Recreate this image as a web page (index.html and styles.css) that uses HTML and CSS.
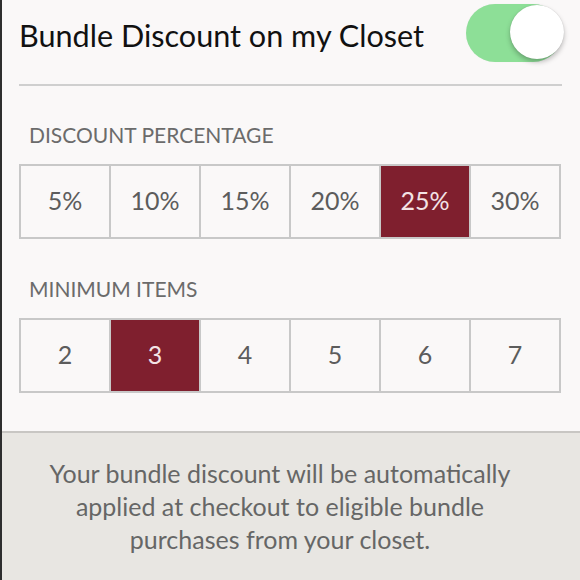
FILE: index.html
```html
<!DOCTYPE html>
<html lang="en">
<head>
<meta charset="utf-8">
<title>Bundle Discount</title>
<link rel="stylesheet" href="styles.css">
</head>
<body>
<div class="screen">
  <header class="head">
    <h1 class="title">Bundle Discount on my Closet</h1>
    <div class="toggle is-on" role="switch" aria-checked="true"><span class="knob"></span></div>
  </header>

  <section class="settings">
    <h2 class="label label-first">DISCOUNT PERCENTAGE</h2>
    <div class="options">
      <div class="opt">5%</div>
      <div class="opt">10%</div>
      <div class="opt">15%</div>
      <div class="opt">20%</div>
      <div class="opt is-selected">25%</div>
      <div class="opt">30%</div>
    </div>

    <h2 class="label">MINIMUM ITEMS</h2>
    <div class="options">
      <div class="opt">2</div>
      <div class="opt is-selected">3</div>
      <div class="opt">4</div>
      <div class="opt">5</div>
      <div class="opt">6</div>
      <div class="opt">7</div>
    </div>
  </section>

  <footer class="note">
    <p>Your bundle discount will be automatically<br>applied at checkout to eligible bundle<br>purchases from your closet.</p>
  </footer>
</div>
</body>
</html>
```

FILE: styles.css
```css
html, body {
  margin: 0;
  padding: 0;
  height: 100%;
}

body {
  background: #faf8f8;
  font-family: Lato, "Liberation Sans", Arial, sans-serif;
  overflow: hidden;
}

.screen {
  height: 580px;
  border-left: 2px solid #2e2e2e;
  display: flex;
  flex-direction: column;
}

/* Top row: title + switch */
.head {
  margin: 0 18px 0 17px;
  height: 84px;
  border-bottom: 2px solid #cfcfcf;
  display: flex;
  justify-content: space-between;
  align-items: flex-start;
}

.title {
  margin: 17px 0 0 0;
  font-size: 30.6px;
  font-weight: 400;
  color: #111;
  line-height: 38px;
}

.toggle {
  position: relative;
  width: 96px;
  height: 58px;
  margin-top: 4px;
  border-radius: 29px;
  background: #8ddf97;
  box-shadow: 0 0 1px rgba(0, 0, 0, 0.08);
}

.knob {
  position: absolute;
  top: 1px;
  right: -2px;
  width: 54px;
  height: 54px;
  border-radius: 50%;
  background: #fff;
  box-shadow: 0 3px 5px rgba(0, 0, 0, 0.25), 0 0 1px rgba(0, 0, 0, 0.2);
}

/* Option grids */
.settings {
  padding: 0 19px 0 17px;
}

.label {
  margin: 38px 0 0 10px;
  font-size: 21px;
  font-weight: 400;
  color: #6b6b6b;
  line-height: 24px;
  letter-spacing: 0;
}

.label-first {
  margin-top: 37px;
}

.options {
  margin-top: 17px;
  display: grid;
  grid-template-columns: repeat(6, 1fr);
  border: 2px solid #c8c8c8;
  border-right: 0;
  height: 71px;
}

.opt {
  display: flex;
  align-items: center;
  justify-content: center;
  padding-bottom: 4px;
  border-right: 2px solid #c8c8c8;
  font-size: 25px;
  color: #5c5c5c;
}

.opt.is-selected {
  background: #7f1f2e;
  color: #f3e3e5;
}

/* Footer note */
.note {
  margin-top: auto;
  height: 147px;
  border-top: 2px solid #c8c6c3;
  background: #e8e6e2;
  text-align: center;
}

.note p {
  margin: 24px 0 0 0;
  padding-right: 22px;
  font-size: 25px;
  line-height: 33px;
  color: #666;
}
```
